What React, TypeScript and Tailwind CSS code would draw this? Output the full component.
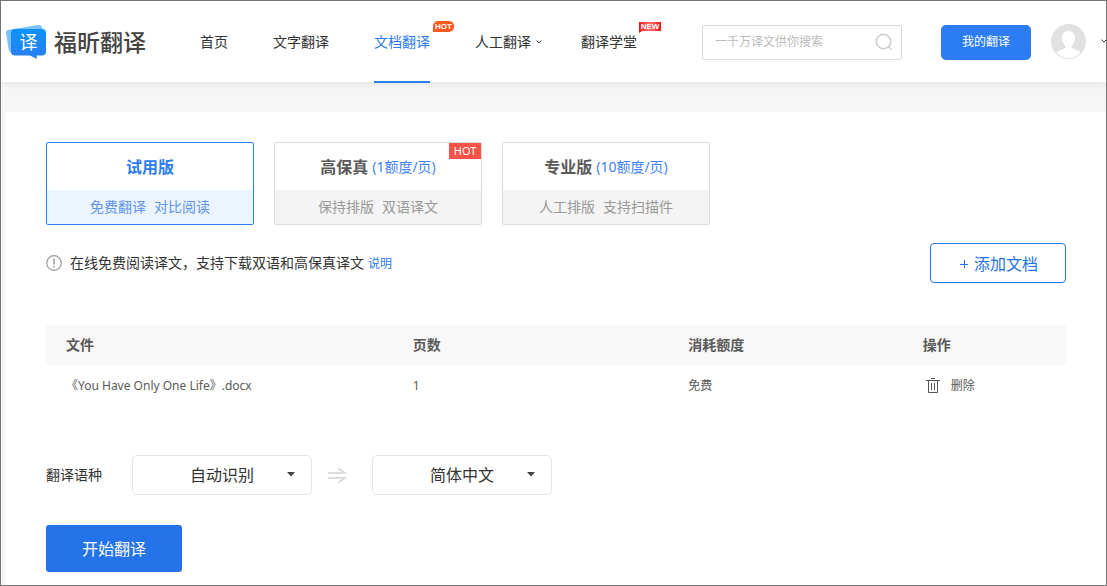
import React from "react";
import clsx from "clsx";

type Plan = {
  name: string;
  price?: string;
  features: string[];
  hot?: boolean;
};

type Doc = {
  name: string;
  pages: number;
  cost: string;
};

const plans: Plan[] = [
  { name: "试用版", features: ["免费翻译", "对比阅读"] },
  { name: "高保真", price: "(1额度/页)", features: ["保持排版", "双语译文"], hot: true },
  { name: "专业版", price: "(10额度/页)", features: ["人工排版", "支持扫描件"] },
];

const docs: Doc[] = [{ name: "《You Have Only One Life》.docx", pages: 1, cost: "免费" }];

function Logo() {
  return (
    <a href="#" className="flex items-center gap-[7px]">
      <svg width="42" height="36" viewBox="0 0 42 36" aria-hidden="true">
        <defs>
          <linearGradient id="logo" x1="0" y1="0" x2="0" y2="1">
            <stop offset="0" stopColor="#0b94fb" />
            <stop offset="1" stopColor="#2b7cf5" />
          </linearGradient>
        </defs>
        <path
          d="M3 6 L33 1 Q36 .5 37 3 L38 8 L12 27 L7 29 Q4 28 3.500 25 L1 9 Q.8 6.500 3 6Z"
          fill="#7cc0fb"
        />
        <path
          d="M10 5H37Q41 5 41 9V27.500Q41 31.500 37 31.500H31.500L32 35L25 31.500H10Q6 31.500 6 27.500V9Q6 5 10 5Z"
          fill="url(#logo)"
        />
        <text
          x="23.500"
          y="25"
          textAnchor="middle"
          fill="#fff"
          className="text-[18px] font-['Noto_Sans_CJK_SC',sans-serif]"
        >
          译
        </text>
      </svg>
      <span className="text-[23px] leading-8 font-medium text-[#444]">福昕翻译</span>
    </a>
  );
}

function Chevron({ className }: { className?: string }) {
  return (
    <svg
      width="8"
      height="6"
      viewBox="0 0 8 6"
      fill="none"
      stroke="#444"
      className={className}
      aria-hidden="true"
    >
      <path d="M1.500 1.500 L4 4 L6.500 1.500" />
    </svg>
  );
}

function Header() {
  return (
    <header className="relative flex h-[81px] items-center bg-white pl-1 shadow-[0_2px_8px_rgba(0,0,0,0.08)]">
      <Logo />
      <nav className="ml-[54px] flex h-full gap-[45px] text-sm text-[#333]">
        <a href="#" className="flex items-center">
          首页
        </a>
        <a href="#" className="flex items-center">
          文字翻译
        </a>
        <a
          href="#"
          aria-current="page"
          className="relative -mb-px flex items-center border-b-2 border-[#2b7bf3] pt-px text-[#2b7bf3]"
        >
          文档翻译
          <span className="absolute top-5 left-full ml-[3px] h-[11px] w-[21px] rounded-[5px] rounded-bl-none bg-[#ff5a1f] text-center font-['Liberation_Sans',sans-serif] text-[8px] leading-[11px] font-bold text-white">
            HOT
          </span>
        </a>
        <a href="#" className="flex items-center">
          人工翻译
          <Chevron className="-mr-[7px] ml-1" />
        </a>
        <a href="#" className="relative flex items-center">
          翻译学堂
          <span className="absolute top-[21px] left-full ml-[2px] h-[9px] w-[22px] bg-linear-to-r from-[#f00008] via-[#ff6a6a] to-[#f00008] text-center font-['Liberation_Sans',sans-serif] text-[8px] leading-[9px] font-bold text-white">
            NEW
            <svg width="3" height="2" viewBox="0 0 3 2" className="absolute top-full left-0" aria-hidden="true">
              <path d="M0 0H3L0 2Z" fill="#f00008" />
            </svg>
          </span>
        </a>
      </nav>
      <div className="ml-auto flex items-center pt-px">
        <form className="flex h-[35px] w-[200px] items-center rounded-xs border border-[#d9d9d9] pr-2 pl-3">
          <input
            type="search"
            aria-label="搜索"
            placeholder="一千万译文供你搜索"
            className="min-w-0 flex-1 text-xs outline-none placeholder:text-[#bbb]"
          />
          <button type="button" aria-label="搜索">
            <svg width="18" height="18" viewBox="0 0 18 18" fill="none" stroke="#ccc" strokeWidth="1.500">
              <circle cx="8.500" cy="8.500" r="7.200" />
              <path d="M13.500 13.500 L16.500 16.500" />
            </svg>
          </button>
        </form>
        <button
          type="button"
          className="ml-[39px] h-[35px] w-[90px] rounded-[5px] bg-[#2c7df5] text-xs text-white"
        >
          我的翻译
        </button>
        <button type="button" aria-label="账户" className="ml-5 flex items-center gap-[15px] pb-0.5">
          <svg width="35" height="35" viewBox="0 0 35 35" aria-hidden="true">
            <circle cx="17.500" cy="17.500" r="17.500" fill="#e1e1e1" />
            <path
              d="M17.500 7 C13.300 7 11 10 11 14 C11 17.500 12.500 20.500 14.500 22 C14.500 24 13.500 24.500 11.500 25.200 C8.500 26.200 6.500 27 5.500 28.500 C8.500 32 12.500 34 17.500 34 C22.500 34 26.500 32 29.500 28.500 C28.500 27 26.500 26.200 23.500 25.200 C21.500 24.500 20.500 24 20.500 22 C22.500 20.500 24 17.500 24 14 C24 10 21.700 7 17.500 7Z"
              fill="#fff"
            />
          </svg>
          <svg width="5" height="4" viewBox="0 0 5 4" fill="none" stroke="#444" aria-hidden="true">
            <path d="M.5 .5 L3 3 L5 1" />
          </svg>
        </button>
      </div>
    </header>
  );
}

function PlanCard({ plan, active }: { plan: Plan; active: boolean }) {
  return (
    <button
      type="button"
      aria-pressed={active}
      className={clsx(
        "relative w-[208px] rounded-xs border",
        active ? "border-[#2b7bf3]" : "border-[#dcdcdc]"
      )}
    >
      <span className="flex h-[47px] items-center justify-center gap-1">
        <span className={clsx("text-base font-bold", active ? "text-[#2b7bf3]" : "text-[#5a5a5a]")}>
          {plan.name}
        </span>
        {plan.price && <span className="text-sm text-[#3f82f7]">{plan.price}</span>}
      </span>
      <span
        className={clsx(
          "flex h-[34px] items-center justify-center gap-2 text-sm",
          active ? "bg-[#ecf4ff] text-[#5f96ea]" : "bg-[#f4f4f4] text-[#999]"
        )}
      >
        {plan.features.map((feature) => (
          <span key={feature}>{feature}</span>
        ))}
      </span>
      {plan.hot && (
        <span className="absolute top-0 right-0 h-4 w-8 bg-[#f95246] text-center text-[11px] leading-4 text-white">
          HOT
        </span>
      )}
    </button>
  );
}

function LanguageSelect({ label, options }: { label: string; options: string[] }) {
  return (
    <div className="relative w-[180px]">
      <select
        aria-label={label}
        className="h-10 w-full appearance-none rounded-[5px] border border-[#e5e5e5] bg-white text-base text-[#333] [text-align-last:center]"
      >
        {options.map((option) => (
          <option key={option}>{option}</option>
        ))}
      </select>
      <svg
        width="8"
        height="5"
        viewBox="0 0 8 5"
        className="pointer-events-none absolute top-[17px] right-[17px]"
        aria-hidden="true"
      >
        <path d="M0 0H8L4 4.500Z" fill="#444" />
      </svg>
    </div>
  );
}

function DocTable() {
  return (
    <table className="mt-[42px] w-full table-fixed text-left text-[#5a5a5a]">
      <thead>
        <tr className="h-10 bg-[#f8f8f8] text-sm">
          <th className="w-[34%] pl-5">文件</th>
          <th className="w-[27%] pl-5">页数</th>
          <th className="w-[23%] pl-5">消耗额度</th>
          <th className="w-[16%] pl-5">操作</th>
        </tr>
      </thead>
      <tbody>
        {docs.map((doc) => (
          <tr key={doc.name} className="h-10 text-xs">
            <td className="pt-0.5 pl-5">{doc.name}</td>
            <td className="pt-0.5 pl-5">{doc.pages}</td>
            <td className="pt-0.5 pl-5">{doc.cost}</td>
            <td className="pt-0.5 pl-5">
              <button type="button" className="flex items-center gap-[11px] pl-[3px]">
                <svg width="14" height="16" viewBox="0 0 14 16" fill="none" stroke="#555" aria-hidden="true">
                  <path d="M5 .5H9M0 2.500H14M2.500 2.500V14.500H11.500V2.500M5.500 5V12M8.500 5V12" />
                </svg>
                删除
              </button>
            </td>
          </tr>
        ))}
      </tbody>
    </table>
  );
}

export default function App() {
  return (
    <div className="flex min-h-screen flex-col overflow-hidden border border-[#757575] bg-[#f6f6f6] font-['Noto_Sans','Noto_Sans_CJK_SC',sans-serif]">
      <Header />
      <main className="mt-[30px] ml-[5px] flex-1 bg-white px-10 pt-[30px] pb-[13px]">
        <div className="flex gap-5">
          {plans.map((plan, i) => (
            <PlanCard key={plan.name} plan={plan} active={i === 0} />
          ))}
        </div>

        <div className="mt-[18px] flex items-center justify-between">
          <p className="flex items-center text-sm text-[#333]">
            <svg width="16" height="16" viewBox="0 0 16 16" fill="none" stroke="#999" className="mr-2" aria-hidden="true">
              <circle cx="8" cy="8" r="7.300" strokeWidth="1.200" />
              <path d="M8 3.500V9.500M8 11V12.500" strokeWidth="1.500" />
            </svg>
            在线免费阅读译文，支持下载双语和高保真译文
            <a href="#" className="ml-1 pt-0.5 text-xs text-[#2b7bf3]">
              说明
            </a>
          </p>
          <button
            type="button"
            className="flex h-10 w-[136px] items-center justify-center gap-1.5 rounded-sm border border-[#2573e8] pt-0.5 pl-0.5 text-base text-[#2573e8]"
          >
            <svg width="8" height="8" viewBox="0 0 8 8" stroke="currentColor" aria-hidden="true">
              <path d="M0 4.500H8M4.500 0V8" />
            </svg>
            添加文档
          </button>
        </div>

        <DocTable />

        <div className="mt-[50px] flex items-center">
          <span className="mr-[30px] text-sm text-[#333]">翻译语种</span>
          <LanguageSelect label="源语言" options={["自动识别", "英语", "简体中文"]} />
          <svg
            width="19"
            height="16"
            viewBox="0 0 19 16"
            fill="none"
            stroke="#ddd"
            strokeWidth="2"
            className="mr-[25px] ml-4"
            aria-hidden="true"
          >
            <path d="M0 6H17L10.500 1.500M0 11H17L10.500 15.500" />
          </svg>
          <LanguageSelect label="目标语言" options={["简体中文", "英语"]} />
        </div>

        <button
          type="button"
          className="mt-[30px] block h-[47px] w-[136px] rounded-[3px] bg-[#2573e8] text-base text-white"
        >
          开始翻译
        </button>
      </main>
    </div>
  );
}
